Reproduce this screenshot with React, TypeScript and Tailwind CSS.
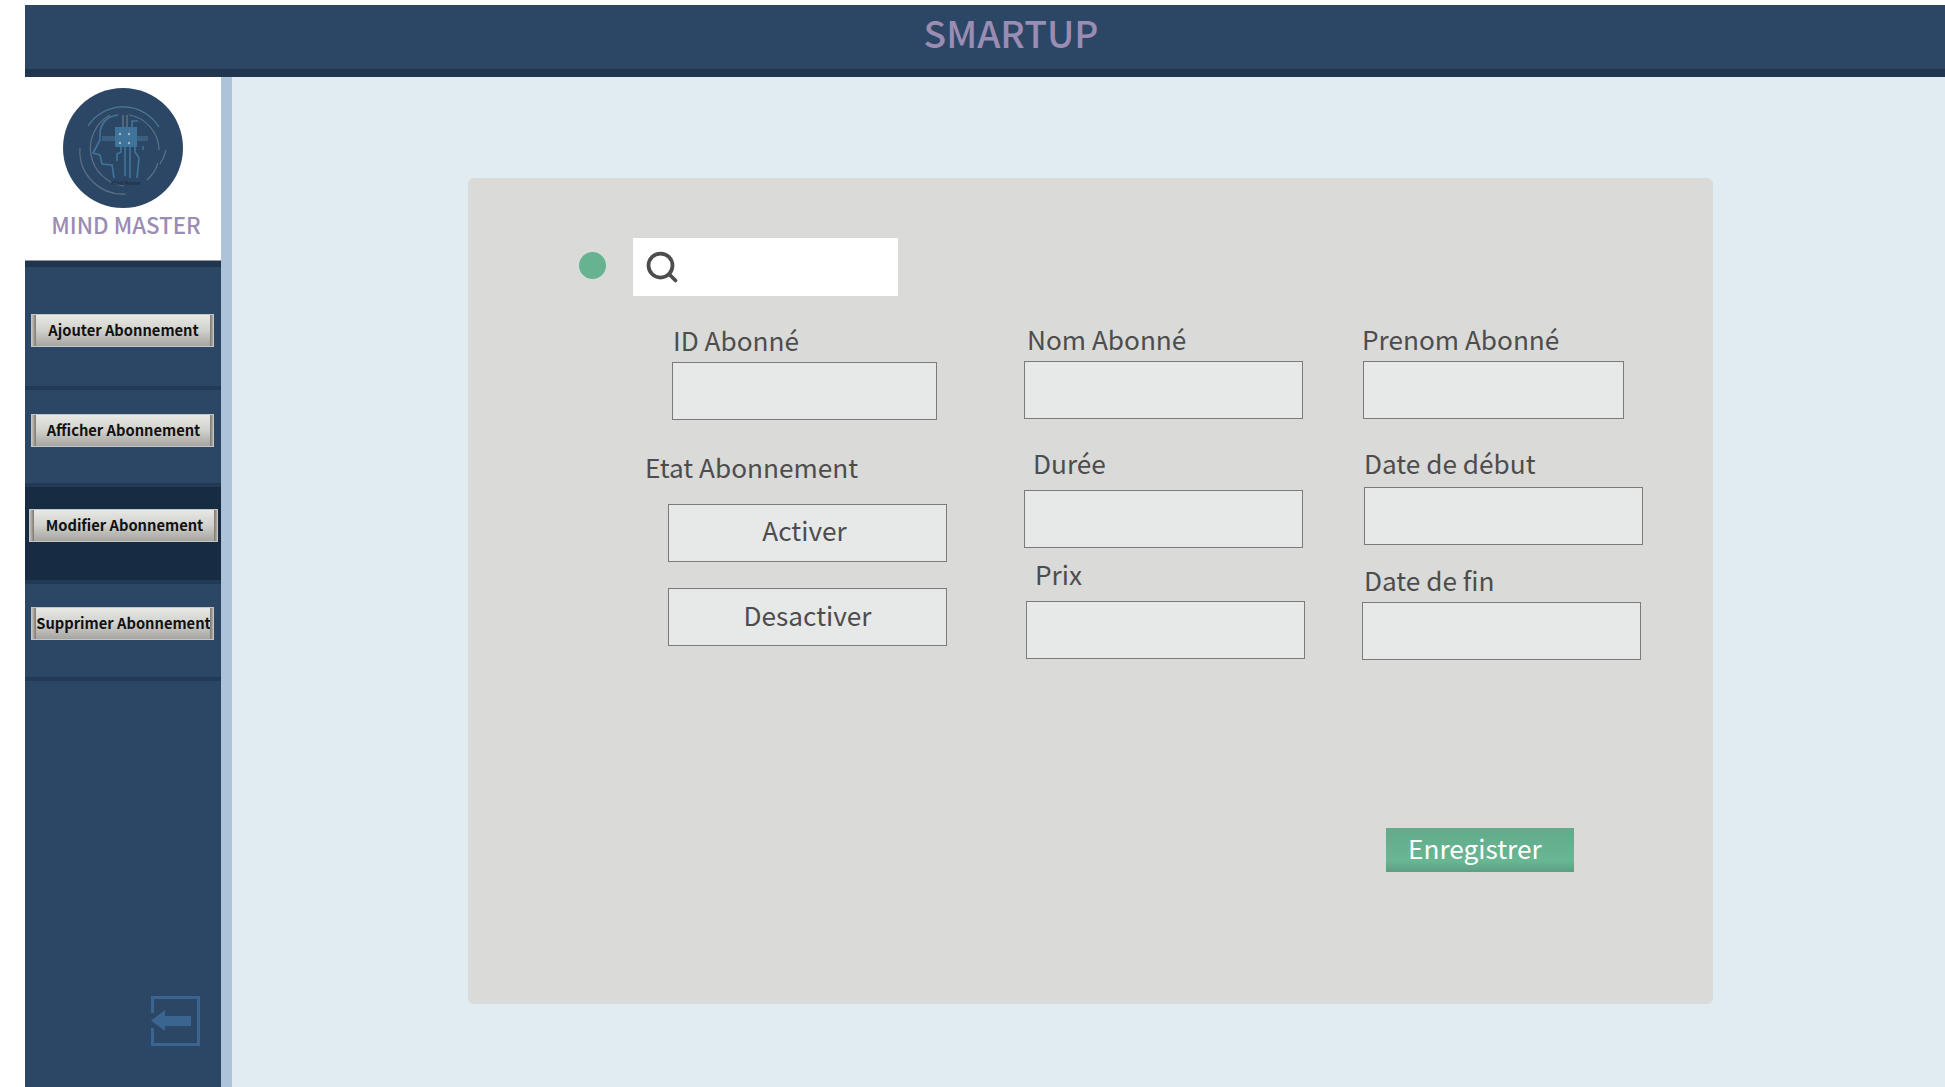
import { Search } from 'lucide-react';

const FONT = '[font-family:"Noto_Sans_CJK_SC","Noto_Sans",sans-serif]';

function Logo() {
  return (
    <svg viewBox="0 0 120 120" className="w-[120px] h-[120px] block">
      <circle cx="60" cy="60" r="60" fill="#2c4766" />
      {/* outer arcs */}
      <g fill="none" stroke="#5d7083" strokeWidth="1.2">
        <path d="M25 38 A42 42 0 0 1 96 39" stroke="#4d7a99" />
        <path d="M47 27 A38 38 0 0 0 61 98" />
        <path d="M66 27 A36 36 0 0 1 96 62" />
        <path d="M17 60 A43 43 0 0 0 63 106" />
        <path d="M103 62 A43 43 0 0 1 97 76" />
        <path d="M95 75 A38 38 0 0 1 84 92" />
      </g>
      {/* head and circuit */}
      <g fill="none" stroke="#41759b" strokeWidth="1.6">
        <path d="M55 27 C44 28 37 36 37 46 L37 52 L30 65 L37 67 L39 76 L49 77 L51 90" />
        <path d="M58 56 L58 64 L54 66 L54 73" />
        <path d="M62 56 L62 88" />
        <path d="M67 56 L67 90" />
        <path d="M72 57 L72 64 L76 70 L74 90" />
        <path d="M60 39 L60 27 M64 39 L64 27" stroke="#5d7083" />
        <path d="M69 39 L69 33 L75 33" />
        <path d="M80 58 L80 62" />
      </g>
      <rect x="39" y="48" width="46" height="5" fill="#3a5f80" />
      <path d="M39 47 H52 M39 54 H52 M74 47 H85 M74 54 H85" stroke="#33485f" strokeWidth="1" />
      <rect x="52" y="39" width="22" height="20" fill="#3f7399" />
      <g fill="#a9b6bf">
        <circle cx="57" cy="46" r="1.2" />
        <circle cx="66" cy="46" r="1.2" />
        <circle cx="57" cy="55" r="1.2" />
        <circle cx="66" cy="55" r="1.2" />
      </g>
      <text x="63" y="97" textAnchor="middle" fontSize="5" fontWeight="700" fill="#1f2f42">
        Mind Master
      </text>
    </svg>
  );
}

function SideButton({ label, className }: { label: string; className: string }) {
  return (
    <button
      className={`${className} h-[33px] flex items-center justify-center pl-[2px] pb-[1px] text-[14.7px] leading-none font-bold text-[#111] whitespace-nowrap border border-[#c4c5c6] bg-gradient-to-b from-[#e8e8e5] via-[#d0d0cc] to-[#a6a5a0] relative`}
    >
      <span className="absolute left-0 top-0 bottom-0 w-[4px] bg-gradient-to-r from-[#c4c2bd] to-[#7d7870]" />
      <span className="absolute right-0 top-0 bottom-0 w-[3px] bg-gradient-to-r from-[#7d7870] to-[#b0aea8]" />
      {label}
    </button>
  );
}

function Separator() {
  return <div className="h-[4px] bg-[#223a56]" />;
}

function Sidebar() {
  return (
    <aside className="w-[196px] shrink-0 bg-[#2c4766] flex flex-col">
      <div className="h-[184px] bg-white flex flex-col items-center pt-[11px] border-b border-[#8e99a5]">
        <Logo />
        <div className="text-[22.3px] leading-[33px] font-medium text-[#9a8cb2] ml-[6px] whitespace-nowrap">
          MIND MASTER
        </div>
      </div>
      <div className="h-[6px] bg-[#20364f]" />
      <div className="h-[119px] pt-[47px] pl-[6px]">
        <SideButton label="Ajouter Abonnement" className="w-[183px]" />
      </div>
      <Separator />
      <div className="h-[93px] pt-[24px] pl-[6px]">
        <SideButton label="Afficher Abonnement" className="w-[183px]" />
      </div>
      <Separator />
      <div className="h-[93px] pt-[22px] pl-[4px] bg-[#172b43]">
        <SideButton label="Modifier Abonnement" className="w-[189px]" />
      </div>
      <Separator />
      <div className="h-[93px] pt-[23px] pl-[6px]">
        <SideButton label="Supprimer Abonnement" className="w-[183px]" />
      </div>
      <Separator />
      <div className="mt-[315px] ml-[126px]">
        <svg viewBox="0 0 49 50" className="w-[49px] h-[50px] block">
          <path d="M1.5 17 V1.5 H47.5 V48.5 H1.5 V32" fill="none" stroke="#3a6591" strokeWidth="3" />
          <path d="M0 24.5 L14 14 V20 H40 V30 H14 V35 Z" fill="#3a6591" />
        </svg>
      </div>
    </aside>
  );
}

function Label({ text, className }: { text: string; className: string }) {
  return <div className={`${className} h-[36px] text-[26.2px] leading-[34px] text-[#4d4d4d] whitespace-nowrap`}>{text}</div>;
}

function Box({ className, children }: { className: string; children?: string }) {
  return (
    <div
      className={`${className} flex items-center justify-center bg-[#e7e9e8] border border-[#7b7b7b] text-[26.2px] text-[#4d4d4d]`}
    >
      {children}
    </div>
  );
}

function AbonnementForm() {
  return (
    <section className="ml-[236px] mt-[101px] w-[1245px] h-[826px] bg-[#dadad8] rounded-[6px] pt-[60px]">
      <div className="flex pl-[111px]">
        <div className="mt-[14px] w-[27px] h-[27px] rounded-full bg-[#66b291]" />
        <div className="ml-[27px] w-[265px] h-[58px] bg-white pl-[11px] pt-[11px]">
          <Search size={36} strokeWidth={2.5} color="#4d4d4d" />
        </div>
      </div>

      <div className="ml-[178px] grid grid-cols-[378px_338px_1fr]">
        <div className="flex flex-col items-start">
          <Label text="ID Abonné" className="mt-[27px] ml-[27px]" />
          <Box className="mt-[3px] ml-[26px] w-[265px] h-[58px]" />
          <Label text="Etat Abonnement" className="mt-[30px] ml-[-1px]" />
          <Box className="mt-[18px] ml-[22px] w-[279px] h-[58px] pb-[5px] pr-[6px]">Activer</Box>
          <Box className="mt-[26px] ml-[22px] w-[279px] h-[58px] pb-[3px]">Desactiver</Box>
        </div>

        <div className="flex flex-col items-start">
          <Label text="Nom Abonné" className="mt-[26px] ml-[3px]" />
          <Box className="mt-[3px] w-[279px] h-[58px]" />
          <Label text="Durée" className="mt-[27px] ml-[9px]" />
          <Box className="mt-[8px] w-[279px] h-[58px]" />
          <Label text="Prix" className="mt-[9px] ml-[11px]" />
          <Box className="mt-[8px] ml-[2px] w-[279px] h-[58px]" />
        </div>

        <div className="flex flex-col items-start">
          <Label text="Prenom Abonné" className="mt-[26px]" />
          <Box className="mt-[3px] ml-[1px] w-[261px] h-[58px]" />
          <Label text="Date de début" className="mt-[27px] ml-[2px]" />
          <Box className="mt-[5px] ml-[2px] w-[279px] h-[58px]" />
          <Label text="Date de fin" className="mt-[18px] ml-[2px]" />
          <Box className="mt-[3px] w-[279px] h-[58px]" />
        </div>
      </div>

      <button className="block mt-[168px] ml-[918px] w-[188px] h-[44px] pl-[22px] pb-[5px] text-left text-[26.2px] leading-[36px] text-white bg-gradient-to-b from-[#62ab8b] via-[#69b693] via-75% to-[#5c9f82]">
        Enregistrer
      </button>
    </section>
  );
}

export default function App() {
  return (
    <div className={`${FONT} w-full h-[1087px] overflow-hidden bg-white pl-[25px] pt-[5px] flex flex-col`}>
      <header className="h-[72px] shrink-0 bg-[#2c4766] border-b-[8px] border-[#20364f] flex justify-center">
        <h1 className="ml-[52px] text-[37.3px] leading-[54px] font-medium text-[#9a8cb2]">SMARTUP</h1>
      </header>
      <div className="flex flex-1 min-h-0">
        <Sidebar />
        <div className="w-[11px] shrink-0 bg-[#adc3d9]" />
        <main className="flex-1 bg-[#e1ecf2]">
          <AbonnementForm />
        </main>
      </div>
    </div>
  );
}
